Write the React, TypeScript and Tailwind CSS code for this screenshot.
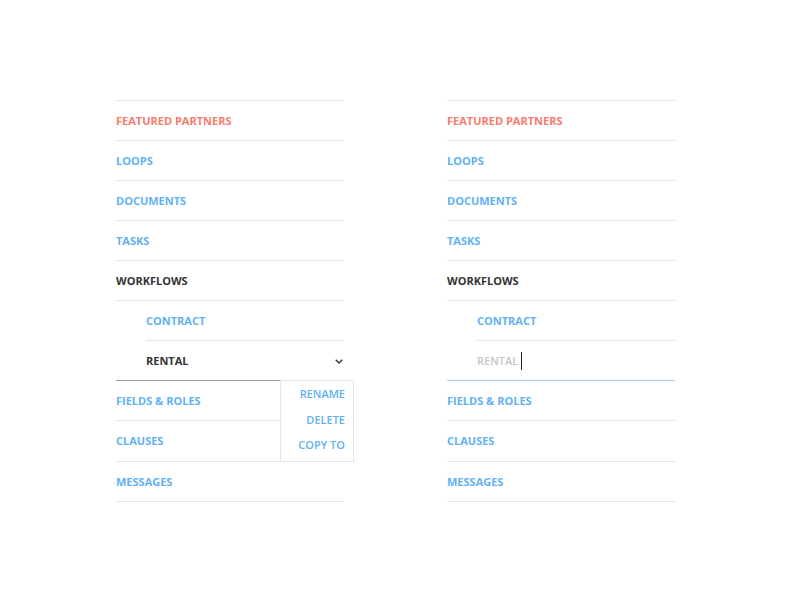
type Item = { label: string; tone: "red" | "blue" | "dark"; sub?: boolean; tall?: boolean };

const top: Item[] = [
  { label: "FEATURED PARTNERS", tone: "red" },
  { label: "LOOPS", tone: "blue" },
  { label: "DOCUMENTS", tone: "blue" },
  { label: "TASKS", tone: "blue" },
  { label: "WORKFLOWS", tone: "dark" },
  { label: "CONTRACT", tone: "blue", sub: true },
];

const bottom: Item[] = [
  { label: "FIELDS & ROLES", tone: "blue" },
  { label: "CLAUSES", tone: "blue", tall: true },
  { label: "MESSAGES", tone: "blue" },
];

const toneClass = {
  red: "text-[#f87b6c]",
  blue: "text-[#62b1f5]",
  dark: "text-[#333]",
};

function Row({ item }: { item: Item }) {
  return (
    <div className={item.sub ? "pl-[30px]" : ""}>
      <div
        className={`flex ${item.tall ? "h-[41px]" : "h-10"} items-center border-b border-[#e4e4e4] pt-px text-[11px] font-bold ${toneClass[item.tone]}`}
      >
        {item.label}
      </div>
    </div>
  );
}

function MenuList({ editing }: { editing?: boolean }) {
  return (
    <div className="w-[228px] border-t border-[#e4e4e4] font-['Open_Sans',sans-serif]">
      {top.map((item) => (
        <Row key={item.label} item={item} />
      ))}
      <div className="relative">
        <div className="pl-[30px]">
          {editing ? (
            <div className="flex h-[39px] items-center pt-px text-[11px] font-semibold text-[#c6c6c6]">
              RENTAL
              <span className="ml-[3px] h-[18px] w-px bg-[#222]" />
            </div>
          ) : (
            <div className="flex h-[39px] items-center justify-between pt-px text-[11px] font-bold text-[#333]">
              RENTAL
              <svg width="8" height="5" viewBox="0 0 8 5" className="mr-px" fill="none">
                <path d="M0.7 0.7 4 4 7.3 0.7" stroke="#333" strokeWidth="1.4" />
              </svg>
            </div>
          )}
        </div>
        <div className={editing ? "h-px bg-[#9fd0fa]" : "h-px w-[164px] bg-[#999]"} />
        {!editing && (
          <div className="absolute left-[164px] top-[39px] z-10 flex h-[82px] w-[74px] flex-col items-end border border-[#e4e4e4] bg-white pr-2 text-[11px] font-semibold text-[#62b1f5]">
            <span className="leading-[26px]">RENAME</span>
            <span className="leading-[26px]">DELETE</span>
            <span className="leading-[24px]">COPY TO</span>
          </div>
        )}
      </div>
      {bottom.map((item) => (
        <Row key={item.label} item={item} />
      ))}
    </div>
  );
}

export default function App() {
  return (
    <div className="flex h-[600px] w-[800px] gap-[103px] bg-white pl-[116px] pt-[100px]">
      <MenuList />
      <MenuList editing />
    </div>
  );
}
